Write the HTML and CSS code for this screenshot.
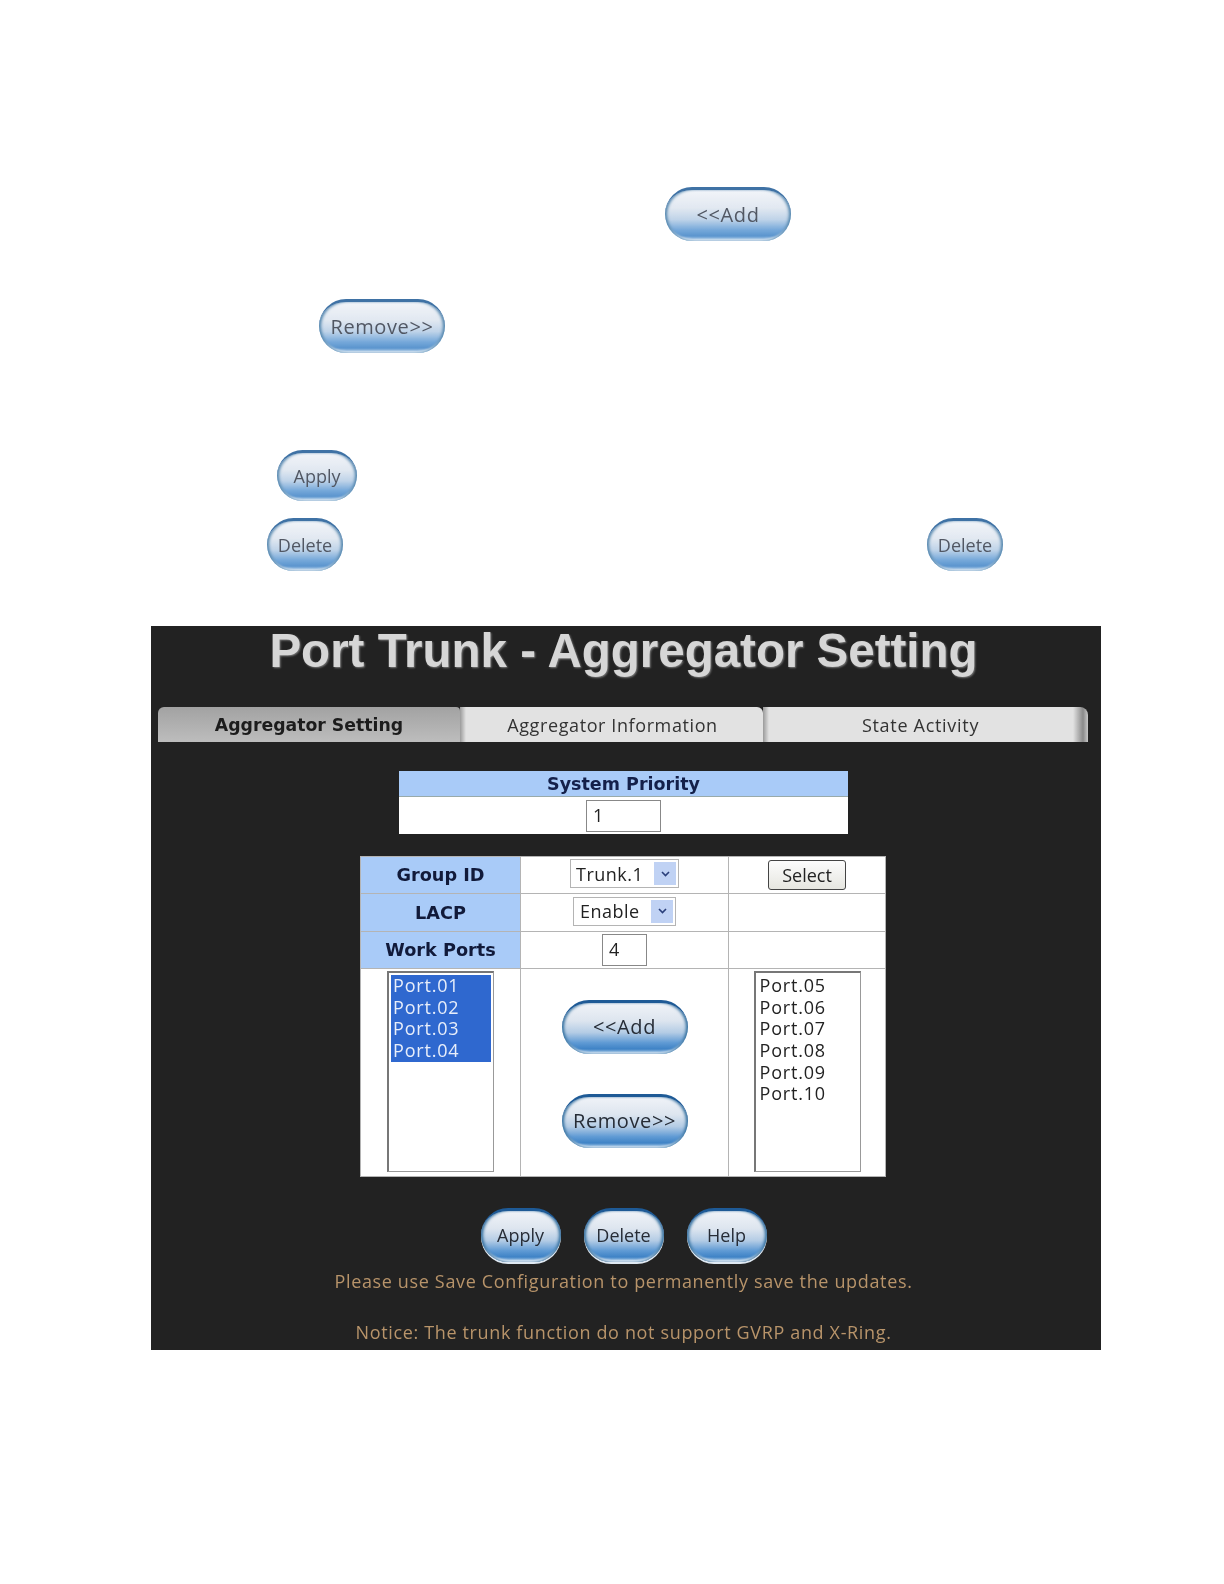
FILE: index.html
```html
<!DOCTYPE html>
<html lang="en">
<head>
    <meta charset="UTF-8">
    <title>Port Trunk - Aggregator Setting</title>
    <link rel="stylesheet" href="styles.css">
</head>
<body>
    <div class="doc-row row-add"><button class="pill faded wide">&lt;&lt;Add</button></div>
    <div class="doc-row row-remove"><button class="pill faded wide">Remove&gt;&gt;</button></div>
    <div class="doc-row row-apply"><button class="pill faded apply">Apply</button></div>
    <div class="doc-row row-delete">
        <button class="pill faded del">Delete</button>
        <button class="pill faded del">Delete</button>
    </div>

    <div class="panel">
        <h1 class="title">Port Trunk - Aggregator Setting</h1>

        <div class="tabs">
            <div class="tab tab-active">Aggregator Setting</div>
            <div class="tab tab-mid">Aggregator Information</div>
            <div class="tab tab-last">State Activity</div>
        </div>

        <div class="priority">
            <div class="priority-head">System Priority</div>
            <div class="priority-body"><div class="field field-priority">1</div></div>
        </div>

        <table class="settings">
            <tr class="row-group">
                <th>Group ID</th>
                <td><div class="combo combo-trunk"><span>Trunk.1</span><span class="combo-arrow"><svg width="9" height="6" viewBox="0 0 9 6"><path d="M1 1l3.5 3.5L8 1" fill="none" stroke="#2a3f7a" stroke-width="1.6"/></svg></span></div></td>
                <td><button class="plain-btn">Select</button></td>
            </tr>
            <tr class="row-lacp">
                <th>LACP</th>
                <td><div class="combo combo-lacp"><span>Enable</span><span class="combo-arrow"><svg width="9" height="6" viewBox="0 0 9 6"><path d="M1 1l3.5 3.5L8 1" fill="none" stroke="#2a3f7a" stroke-width="1.6"/></svg></span></div></td>
                <td></td>
            </tr>
            <tr class="row-work">
                <th>Work Ports</th>
                <td><div class="field field-work">4</div></td>
                <td></td>
            </tr>
            <tr class="row-lists">
                <td>
                    <div class="listbox">
                        <div class="opt opt-on">Port.01</div>
                        <div class="opt opt-on">Port.02</div>
                        <div class="opt opt-on">Port.03</div>
                        <div class="opt opt-on">Port.04</div>
                    </div>
                </td>
                <td>
                    <div class="move-btns">
                        <button class="pill wide">&lt;&lt;Add</button>
                        <button class="pill wide">Remove&gt;&gt;</button>
                    </div>
                </td>
                <td>
                    <div class="listbox">
                        <div class="opt">Port.05</div>
                        <div class="opt">Port.06</div>
                        <div class="opt">Port.07</div>
                        <div class="opt">Port.08</div>
                        <div class="opt">Port.09</div>
                        <div class="opt">Port.10</div>
                    </div>
                </td>
            </tr>
        </table>

        <div class="actions">
            <button class="pill on-dark">Apply</button>
            <button class="pill on-dark">Delete</button>
            <button class="pill on-dark">Help</button>
        </div>

        <p class="note note-save">Please use Save Configuration to permanently save the updates.</p>
        <p class="note note-trunk">Notice: The trunk function do not support GVRP and X-Ring.</p>
    </div>
</body>
</html>
```

FILE: styles.css
```css
body {
    margin: 0;
    background-color: #fff;
    font-family: "Open Sans", "Noto Sans", sans-serif;
    color: #222;
    filter: blur(0.6px);
}
button {
    font-family: inherit;
}

/* loose buttons above the screenshot */
.doc-row {
    display: flex;
}
.row-add {
    padding: 187px 0 0 665px;
}
.row-remove {
    padding: 58px 0 0 319px;
}
.row-apply {
    padding: 97px 0 0 277px;
}
.row-delete {
    padding: 17px 0 0 267px;
    gap: 584px;
}

.pill {
    width: 80px;
    height: 54px;
    padding: 0 0 3px;
    border: 0;
    border-top: 3px solid #1e5a96;
    border-radius: 27px;
    background: linear-gradient(to bottom, #f0f3f8 0%, #dde5ef 35%, #b4cce5 58%, #5f9ad4 78%, #3f83c6 90%, #a8c8e6 100%);
    box-shadow: inset 3px 0 3px -1px #34709f, inset -3px 0 3px -1px #34709f, inset 0 -3px 2px -1px #d6e6f4;
    font-size: 18px;
    color: #262c36;
}
.wide {
    width: 126px;
    font-size: 20px;
    letter-spacing: 0.6px;
}
.faded {
    opacity: 0.85;
    color: #333a48;
}
.apply {
    width: 80px;
    height: 51px;
}
.del {
    width: 76px;
    height: 53px;
}
.on-dark {
    box-shadow: inset 3px 0 3px -1px #34709f, inset -3px 0 3px -1px #34709f, inset 0 -3px 2px -1px #e6eff8, 0 2px 0 #dfe9f3;
}

/* dark screenshot */
.panel {
    width: 950px;
    height: 724px;
    margin: 55px 0 0 151px;
    background-color: #222;
}
.title {
    margin: 0;
    height: 81px;
    padding-right: 5px;
    font-family: "Liberation Sans", Arial, sans-serif;
    font-size: 47.5px;
    line-height: 50px;
    font-weight: bold;
    text-align: center;
    color: #d6d6d6;
    text-shadow: 1px 1px 2px #7a7a7a;
}

.tabs {
    display: flex;
    width: 930px;
    height: 35px;
    margin-left: 7px;
}
.tab {
    display: flex;
    align-items: center;
    justify-content: center;
    font-size: 18px;
    color: #333;
    background: linear-gradient(to right, #9a9a9a 0, #e2e2e2 6px, #e2e2e2 100%);
}
.tab-active {
    width: 302px;
    border-radius: 6px 4px 0 0;
    font-family: "DejaVu Sans", sans-serif;
    font-size: 17.3px;
    font-weight: bold;
    color: #1c1c1c;
    background: linear-gradient(to bottom, #a2a2a2, #bdbdbd);
}
.tab-mid {
    width: 303px;
    padding-left: 2px;
    box-sizing: border-box;
    border-radius: 0 6px 0 0;
    letter-spacing: 0.6px;
}
.tab-last {
    width: 325px;
    padding-right: 10px;
    box-sizing: border-box;
    border-radius: 0 8px 0 0;
    background: linear-gradient(to right, #9a9a9a 0, #e2e2e2 6px, #e2e2e2 310px, #8a8a8a 320px, #c8c8c8 100%);
    letter-spacing: 0.7px;
}

.priority {
    width: 449px;
    height: 63px;
    margin: 29px 0 0 248px;
    background-color: #fff;
}
.priority-head {
    height: 26px;
    background-color: #a9cbf8;
    border-bottom: 1px solid #9aa;
    box-sizing: border-box;
    font-family: "DejaVu Sans", sans-serif;
    font-size: 17.5px;
    font-weight: bold;
    line-height: 27px;
    text-align: center;
    color: #14204a;
}
.priority-body {
    display: flex;
    justify-content: center;
    padding-top: 3px;
}

.field {
    box-sizing: border-box;
    border: 1px solid #888;
    background-color: #fff;
    font-size: 18px;
    line-height: 29px;
    padding-left: 6px;
    text-align: left;
}
.field-priority {
    width: 75px;
    height: 32px;
}
.field-work {
    width: 45px;
    height: 32px;
    margin: 0 auto;
}

.settings {
    width: 526px;
    margin: 22px 0 0 209px;
    border-collapse: collapse;
    table-layout: fixed;
    background-color: #fff;
    text-align: center;
}
.settings th,
.settings td {
    padding: 0;
    border: 1px solid #b4b4b4;
}
.settings th {
    width: 159px;
    background-color: #a9cbf8;
    font-family: "DejaVu Sans", sans-serif;
    font-size: 17.7px;
    color: #111a3a;
}
.settings td:last-child {
    width: 156px;
}
.row-group {
    height: 37px;
}
.row-lacp {
    height: 38px;
}
.row-work {
    height: 37px;
}
.row-lists {
    height: 208px;
}

.combo {
    display: flex;
    align-items: center;
    justify-content: space-between;
    box-sizing: border-box;
    height: 29px;
    margin: 0 auto 3px;
    padding: 0 2px 0 5px;
    border: 1px solid #b4b4b4;
    font-size: 18px;
    letter-spacing: 0.5px;
}
.combo-trunk {
    width: 109px;
}
.combo-lacp {
    width: 103px;
    padding-left: 6px;
}
.combo-arrow {
    display: flex;
    align-items: center;
    justify-content: center;
    width: 22px;
    height: 23px;
    background-color: #c0d2f4;
}
.plain-btn {
    width: 78px;
    height: 30px;
    padding: 0;
    border: 1px solid #444;
    border-radius: 3px;
    background: linear-gradient(to bottom, #fcfcfc, #e6e6e0);
    font-size: 18px;
    color: #222;
}

.listbox {
    box-sizing: border-box;
    width: 107px;
    height: 201px;
    margin: 0 auto 2px;
    padding: 2px;
    border: 1px solid #999;
    border-left-width: 2px;
    border-top-width: 2px;
    border-top-color: #777;
    border-left-color: #777;
    text-align: left;
    font-size: 18px;
    letter-spacing: 0.8px;
}
.opt {
    height: 21.7px;
    line-height: 21.7px;
    padding-left: 2px;
    color: #222;
}
.opt-on {
    background-color: #2f68cf;
    color: #e8eefa;
}
.move-btns {
    display: flex;
    flex-direction: column;
    align-items: center;
    gap: 40px;
    padding-top: 2px;
}

.actions {
    display: flex;
    justify-content: center;
    gap: 23px;
    margin-top: 31px;
    padding-right: 5px;
}
.note {
    margin: 0;
    padding-right: 5px;
    font-size: 18px;
    line-height: 26px;
    text-align: center;
    color: #b8946a;
    letter-spacing: 0.65px;
}
.note-save {
    margin-top: 6px;
}
.note-trunk {
    margin-top: 25px;
}
```
